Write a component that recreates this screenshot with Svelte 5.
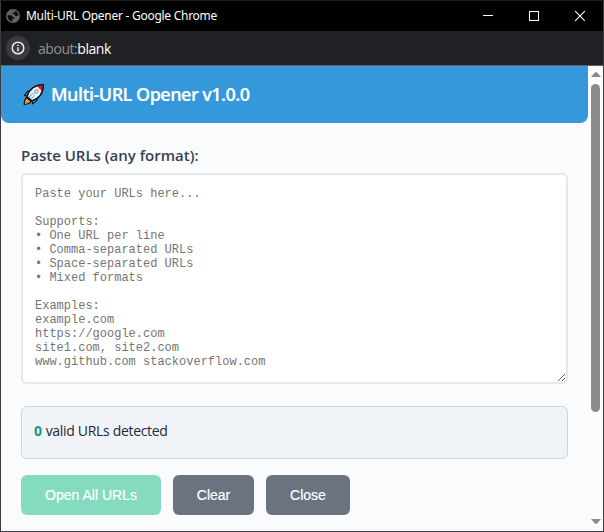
<script>
  const hint = `Paste your URLs here...

Supports:
• One URL per line
• Comma-separated URLs
• Space-separated URLs
• Mixed formats

Examples:
example.com
https://google.com
site1.com, site2.com
www.github.com stackoverflow.com`;
  let count = $state(0);
</script>

<div class="window">
  <div class="titlebar">
    <svg class="globe" width="14" height="14" viewBox="0 0 14 14">
      <circle cx="7" cy="7" r="7" fill="#5f6368" />
      <path d="M1.5 6.2H4.2C5.8 6.2 6.8 7 6.8 8.3H8.3V9.8H6.3V12.4C3.6 12.2 1.3 9.8 1.5 6.2ZM7.6 1.5 9.6 2.2 8.3 3.7H6.8V5.2H8.3C9 5.2 9.2 6.2 9.2 7H11L12.5 6.2C12.4 4 10.5 1.6 7.6 1.5Z" fill="#0b0b0c" />
    </svg>
    <span class="title">Multi-URL Opener - Google Chrome</span>
    <svg class="controls" width="138" height="30" viewBox="0 0 138 30" fill="none" stroke="#fff">
      <path d="M18 14.5h10" />
      <rect x="64.5" y="10.5" width="9" height="9" />
      <path d="M110.2 10.2l9.6 9.6M119.8 10.2l-9.6 9.6" stroke-width="1.1" />
    </svg>
  </div>
  <div class="address">
    <span class="info">
      <svg width="14" height="14" viewBox="0 0 14 14" fill="none" stroke="#e8eaed" stroke-width="1.5">
        <circle cx="7" cy="7" r="5.8" />
        <path d="M7 6.2v4M7 3.7v1.4" />
      </svg>
    </span>
    <span class="url">about:<b>blank</b></span>
  </div>
  <div class="view">
    <main>
      <header>
        <svg width="23" height="23" viewBox="0 0 23 23" stroke="#10151b" stroke-width="1.2" stroke-linejoin="round">
          <path d="M9.5 7.8 5.8 8.2 2.6 12.4 6.4 13.3ZM15.3 13.6 14.9 17.4 10.7 20.8 9.8 16.8Z" fill="#2fc0ea" />
          <path d="M4.8 14.6 8.9 18.4C8 20.8 5 21.3 2.2 21.4 2.2 18.7 2.4 16 4.8 14.6Z" fill="#f7941d" />
          <path d="M5 13.6C7.2 6.6 12.6 1.8 21.4 1.5 21.4 9.8 16.8 15.6 9.8 18Z" fill="#f2f4f7" />
          <path d="M14.8 2.9C16.8 1.9 19 1.6 21.4 1.5 21.4 4.1 21 6.3 20 8.3Z" fill="#e81224" stroke="none" />
          <path d="M6.6 13.8 9.6 16.4 13.2 11.8 10.9 9.4Z" fill="#2fc0ea" stroke="none" />
          <path d="M12 10.9 8.4 15" stroke="#f2f4f7" stroke-width="1.8" />
          <path d="M5 13.6C7.2 6.6 12.6 1.8 21.4 1.5 21.4 9.8 16.8 15.6 9.8 18Z" fill="none" />
          <circle cx="14.4" cy="8.4" r="2" fill="#c3c9cf" stroke="#98a0a8" stroke-width=".8" />
        </svg>
        <h1>Multi-URL Opener v1.0.0</h1>
      </header>
      <section>
        <label for="urls">Paste URLs (any format):</label>
        <textarea id="urls" placeholder={hint}></textarea>
        <div class="status"><strong>{count}</strong><span>valid URLs detected</span></div>
        <div class="actions">
          <button class="open">Open All URLs</button>
          <button class="clear">Clear</button>
          <button class="close">Close</button>
        </div>
      </section>
    </main>
    <div class="scroll">
      <svg width="10" height="5" viewBox="0 0 10 5"><path d="M0 5 4.2.3h1.6L10 5Z" fill="#8b8b8b" /></svg>
      <i></i>
      <svg class="down" width="10" height="5" viewBox="0 0 10 5"><path d="M0 0h10L5.8 4.7H4.2Z" fill="#8b8b8b" /></svg>
    </div>
  </div>
</div>

<style>
  .window { box-sizing: border-box; width: 604px; height: 532px; border: 1px solid #3d3b42; border-top-color: #1f1f1f; display: flex; flex-direction: column; overflow: hidden; font-family: "Open Sans", "Noto Sans", sans-serif; }
  .titlebar { height: 30px; background: #000; display: flex; align-items: center; color: #fff; flex: none; }
  .globe { margin: 0 0 1px 5px; }
  .title { margin-left: 6px; padding-bottom: 1px; font-family: "Noto Sans", sans-serif; font-size: 12px; letter-spacing: -0.27px; white-space: nowrap; }
  .controls { margin-left: auto; }
  .address { height: 34px; box-sizing: border-box; flex: none; background: #202124; display: flex; align-items: center; padding-left: 5px; }
  .info { width: 24px; height: 24px; border-radius: 50%; background: #3a3a3b; display: flex; align-items: center; justify-content: center; }
  .url { margin-left: 8px; color: #8c9196; font-size: 14px; letter-spacing: -0.45px; }
  .url b { color: #fff; font-weight: 400; }
  .view { flex: 1; min-height: 0; display: flex; border-top: 1px solid #626265; background: #fafbfd; }
  main { width: 587px; }
  header { height: 57px; background: #3598db; border-radius: 0 0 8px 8px; display: flex; align-items: center; padding-left: 21px; box-sizing: border-box; }
  h1 { margin: 0 0 1px 6px; color: #fff; font-size: 18px; line-height: 24px; font-weight: 600; letter-spacing: -0.53px; -webkit-text-stroke: 0.2px; white-space: nowrap; }
  section { padding: 21px 20px 0; }
  label { display: block; height: 29px; line-height: 22px; font-size: 15px; font-weight: 600; color: #374151; }
  textarea { display: block; box-sizing: border-box; width: 547px; height: 211px; margin: 0; padding: 12px; border: 2px solid #e5e7eb; border-radius: 6px; background: #fff; resize: vertical; overflow: hidden; font: 12px/14px "Liberation Mono", monospace; outline: none; }
  textarea::placeholder { color: #757575; opacity: 1; }
  .status { box-sizing: border-box; height: 53px; margin-top: 22px; padding: 13px 12px; border: 1px solid #cbd5e1; border-radius: 6px; background: #f0f4f9; color: #1f2937; font-size: 14px; letter-spacing: -0.32px; line-height: 21px; white-space: nowrap; }
  .status strong { color: #159a75; font-weight: 700; margin-right: 4px; }
  .actions { display: flex; gap: 12px; margin-top: 16px; }
  button { height: 40px; padding: 0; border: 0; border-radius: 6px; background: #6b7280; color: #fff; font: 14px "Liberation Sans", Arial, sans-serif; -webkit-text-stroke: 0.2px; }
  .open { width: 140px; background: #85dbbf; }
  .clear { width: 81px; }
  .close { width: 84px; }
  .scroll { width: 15px; background: #fcfcfc; display: flex; flex-direction: column; align-items: center; padding: 6px 0 7px; box-sizing: border-box; }
  .scroll i { width: 9px; height: 328px; margin-top: 7px; border-radius: 5px; background: #8b8b8b; }
  .down { margin-top: auto; }
</style>
